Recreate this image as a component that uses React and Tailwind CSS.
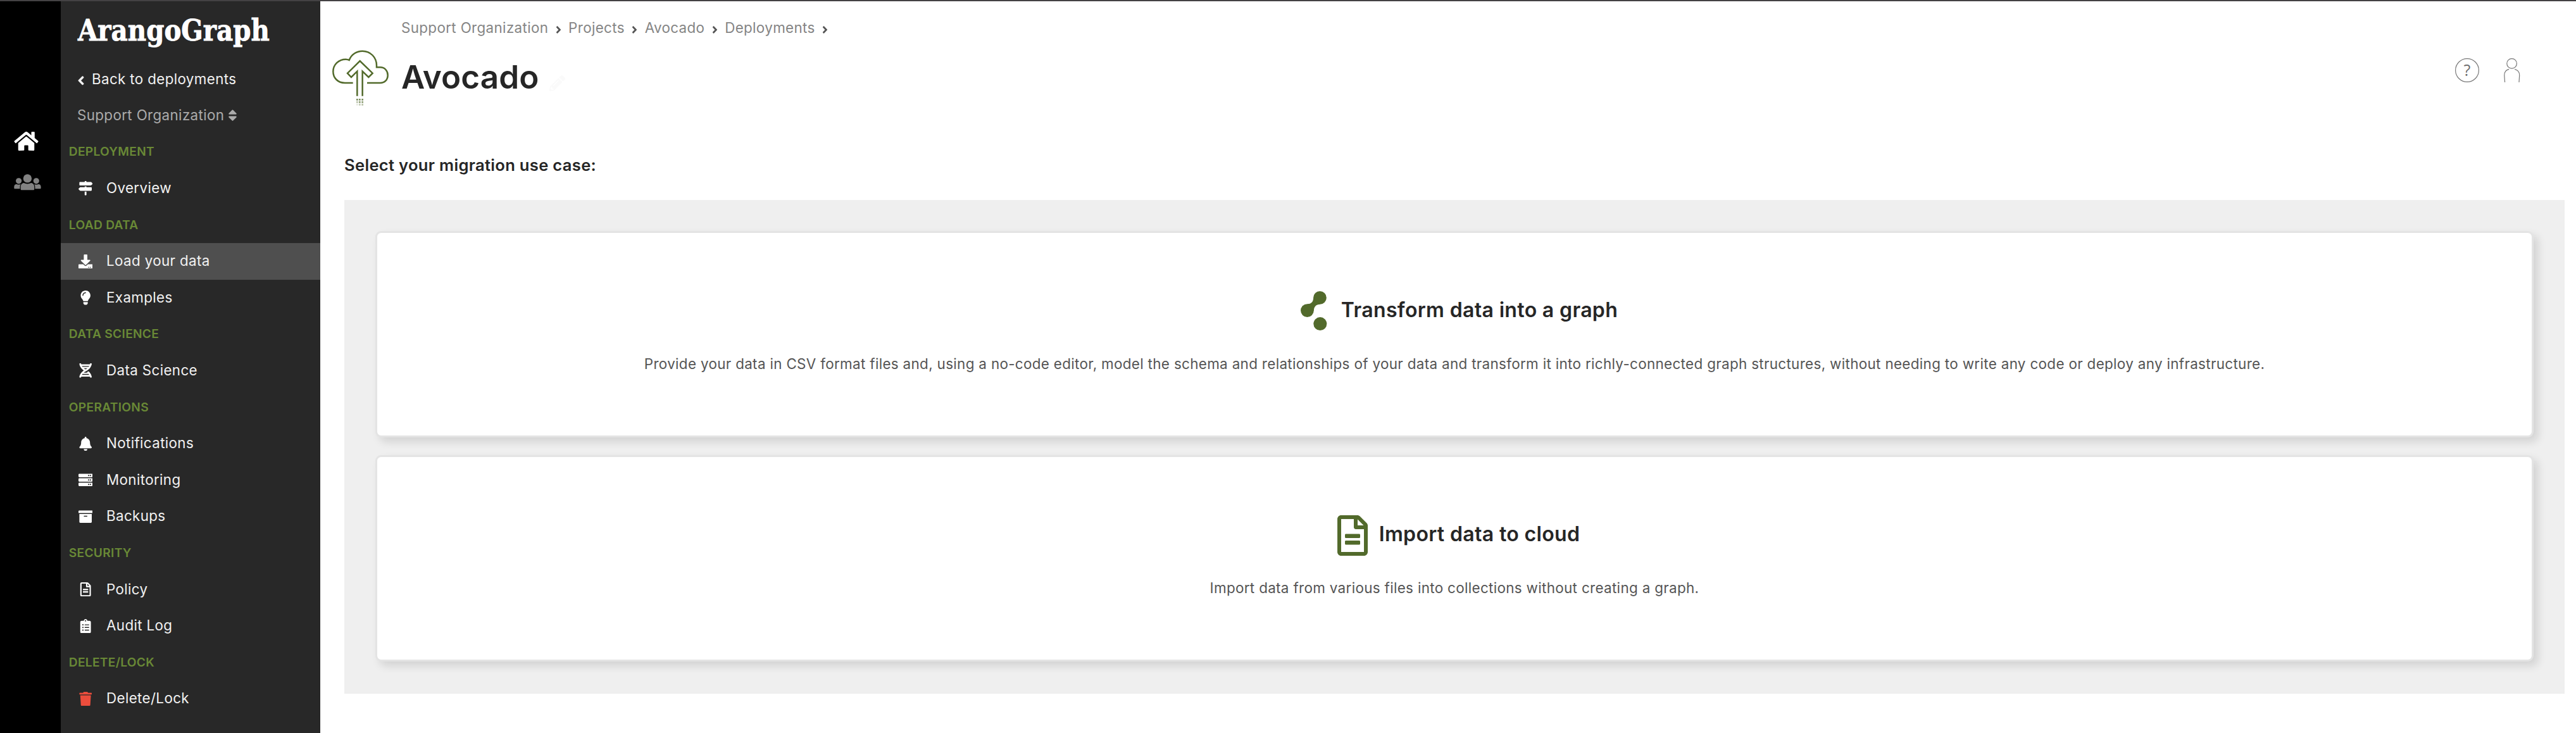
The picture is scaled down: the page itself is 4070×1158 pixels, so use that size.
import React from "react";
import {
  FaAngleLeft,
  FaAngleRight,
  FaArchive,
  FaBell,
  FaClipboardList,
  FaDna,
  FaDownload,
  FaHome,
  FaLightbulb,
  FaMapSigns,
  FaPencilAlt,
  FaRegFileAlt,
  FaServer,
  FaSort,
  FaTrash,
} from "react-icons/fa";

const NAV = [
  { heading: "DEPLOYMENT", items: [{ label: "Overview", Icon: FaMapSigns }] },
  {
    heading: "LOAD DATA",
    items: [
      { label: "Load your data", Icon: FaDownload, active: true },
      { label: "Examples", Icon: FaLightbulb },
    ],
  },
  { heading: "DATA SCIENCE", items: [{ label: "Data Science", Icon: FaDna }] },
  {
    heading: "OPERATIONS",
    items: [
      { label: "Notifications", Icon: FaBell },
      { label: "Monitoring", Icon: FaServer },
      { label: "Backups", Icon: FaArchive },
    ],
  },
  {
    heading: "SECURITY",
    items: [
      { label: "Policy", Icon: FaRegFileAlt },
      { label: "Audit Log", Icon: FaClipboardList },
    ],
  },
  {
    heading: "DELETE/LOCK",
    items: [{ label: "Delete/Lock", Icon: FaTrash, danger: true }],
  },
];

const CRUMBS = ["Support Organization", "Projects", "Avocado", "Deployments"];

function UsersIcon() {
  return (
    <svg viewBox="0 0 43 26" className="h-[26px] w-[43px] fill-[#828282]">
      <circle cx="21.4" cy="6.9" r="6.7" />
      <circle cx="7.6" cy="10.8" r="4.6" />
      <circle cx="35.3" cy="10.8" r="4.6" />
      <path d="M10.7 25.2V20.5C10.7 17 12.4 14.5 15.7 14.1C17.3 14.9 19.3 15.4 21.4 15.4C23.5 15.4 25.5 14.9 27.1 14.1C30.5 14.5 32.2 17 32.2 20.5V23.7C32.2 24.7 31.4 25.3 30.4 25.3H12.5C11.4 25.3 10.7 24.7 10.7 23.7Z" />
      <path d="M.3 22V20C.3 17.5 1.8 15.9 4.2 15.9C6.3 17 8.8 17 10.8 15.9C9.9 17.3 9.5 19 9.5 20.8V23.3H1.6C.8 23.3 .3 22.8 .3 22Z" />
      <path d="M42.6 22V20C42.6 17.5 41.1 15.9 38.7 15.9C36.6 17 34.1 17 32.1 15.9C33 17.3 33.4 19 33.4 20.8V23.3H41.3C42.1 23.3 42.6 22.8 42.6 22Z" />
    </svg>
  );
}

function CloudUploadIcon() {
  return (
    <svg viewBox="0 0 330 330" className="h-[110px] w-[110px] shrink-0">
      <g fill="none" stroke="#526a2b" strokeWidth="7.5">
        <path d="M128 183H90C56 183 34 159 34 129C34 96 61 71 94 71C100 71 105 72 110 75C120 48 145 32 173 32C211 32 240 62 240 100V109H257C279 109 293 126 293 146C293 168 278 183 257 183H195" />
        <path d="M148 245V128L120 156L102 137L161 79L221 137L202 156L173 128V245" />
      </g>
      <g fill="#526a2b">
        <path d="M144 258h8v8h-8zM156 258h8v8h-8zM169 258h8v8h-8z" opacity=".75" />
        <path d="M156 270h8v8h-8zM169 270h8v8h-8z" opacity=".65" />
        <path d="M144 270h8v8h-8zM169 282h8v8h-8z" opacity=".4" />
        <path d="M156 282h8v8h-8z" opacity=".35" />
        <path d="M144 282h8v8h-8z" opacity=".15" />
      </g>
    </svg>
  );
}

function GraphIcon() {
  return (
    <svg viewBox="0 0 42 64" className="ml-[15px] mr-[22px] h-[64px] w-[42px] fill-[#526a2b]">
      <circle cx="30.4" cy="10.4" r="10.4" />
      <circle cx="10.4" cy="30.6" r="10.4" />
      <circle cx="30.8" cy="51.6" r="10.5" />
      <path d="M20 10.8C20 17 16.5 20.4 10.4 20.3L20.8 31C20.8 24.5 24.5 20.7 30.8 20.7Z" />
    </svg>
  );
}

function HelpIcon() {
  return (
    <svg viewBox="0 0 38 38" className="h-[38px] w-[38px]">
      <circle cx="19" cy="19" r="18.4" fill="none" stroke="#787878" strokeWidth="1.2" />
      <text x="18.8" y="28" textAnchor="middle" fill="#6c6c6c" className="font-['Open_Sans',sans-serif] text-[25px]">
        ?
      </text>
    </svg>
  );
}

function UserIcon() {
  return (
    <svg viewBox="0 0 26 38" className="h-[38px] w-[26px]" fill="none" stroke="#787878" strokeWidth="1.2">
      <circle cx="12.6" cy="8.4" r="7.8" />
      <path d="M8.1 17.3C3 18.6.7 22 .8 27L1.6 38M17.2 17.3C22.3 18.6 24.8 22 24.7 27L24 38" />
    </svg>
  );
}

function NavItem({ label, Icon, active, danger }) {
  return (
    <a className={`flex h-[57.6px] items-center gap-[18px] pl-[24px] ${active ? "bg-[#4f4f4f]" : ""}`}>
      <span className={`flex w-[30px] justify-center text-[22.4px] ${danger ? "text-[#ec4d3c]" : "text-white"}`}>
        <Icon />
      </span>
      <span className="pb-px">{label}</span>
    </a>
  );
}

function Sidebar() {
  return (
    <nav className="w-[410px] shrink-0 bg-[#282828] text-[22.4px] leading-[32px] tracking-[0.35px] text-[#f1f1f1]">
      <div className="h-[94px] pl-[27px] pt-[16px]">
        <div className="w-max origin-left scale-x-[0.955] font-['DejaVu_Serif_Condensed','DejaVu_Serif',serif] text-[47px] font-bold leading-[60px] tracking-normal text-white [-webkit-text-stroke:0.8px_white]">
          ArangoGraph
        </div>
      </div>
      <a className="flex h-[57.6px] items-center pl-[25px]">
        <FaAngleLeft className="mr-[10px] mt-[4px] w-[14px] shrink-0" />
        <span>Back to deployments</span>
      </a>
      <div className="flex h-[57.6px] items-center gap-[6px] pl-[26px] text-[#ababab]">
        <span>Support Organization</span>
        <FaSort className="w-[15px]" />
      </div>
      {NAV.map(({ heading, items }) => (
        <section key={heading}>
          <h2 className="flex h-[57.6px] items-center pb-px pl-[12.8px] text-[19.2px] font-semibold tracking-[0.28px] text-[#698936]">
            {heading}
          </h2>
          {items.map((item) => (
            <NavItem key={item.label} {...item} />
          ))}
        </section>
      ))}
    </nav>
  );
}

function Card({ icon, title, children }) {
  return (
    <section className="flex h-[326px] flex-col items-center rounded-[9px] border-[3px] border-[#e4e4e4] bg-white pt-[92px] shadow-[7px_7px_14px_rgba(0,0,0,0.12)]">
      <div className="flex h-[64px] items-center">
        {icon}
        <h3 className="pb-[5px] text-[32px] font-semibold leading-[40px] tracking-[0.35px] text-[#262626]">{title}</h3>
      </div>
      <p className="mt-[35px] whitespace-nowrap text-[22.4px] leading-[32px] tracking-[0.34px] text-[#555]">{children}</p>
    </section>
  );
}

export default function App() {
  return (
    <div className="flex h-[1158px] flex-col overflow-hidden border-t-2 border-[#444244] bg-white font-['Inter',sans-serif]">
      <div className="flex min-h-0 flex-1">
        <aside className="flex w-[96px] shrink-0 flex-col bg-black pl-[22px] pt-[204px]">
          <FaHome className="h-[34px] w-[39px] text-white" />
          <div className="mt-[34.5px]">
            <UsersIcon />
          </div>
        </aside>
        <Sidebar />
        <main className="min-w-0 flex-1 pr-[18px]">
          <header className="flex h-[243px] items-start pl-[9px]">
            <div className="pt-[68px]">
              <CloudUploadIcon />
            </div>
            <div className="ml-[9px] flex-1 pt-[27px]">
              <div className="flex h-[30px] items-center text-[22.4px] leading-[30px] tracking-[0.35px] text-[#858585]">
                {CRUMBS.map((crumb) => (
                  <React.Fragment key={crumb}>
                    <span>{crumb}</span>
                    <FaAngleRight className="mx-[10.4px] mt-[5px] h-[18px] w-[11px] text-[#555]" />
                  </React.Fragment>
                ))}
              </div>
              <div className="mt-[32px] flex h-[60px] items-center">
                <h1 className="text-[51.2px] font-semibold leading-[60px] tracking-[0.1px] text-[#262626]">Avocado</h1>
                <FaPencilAlt className="ml-[16px] mt-[20px] text-[25px] text-[#fafafa]" />
              </div>
            </div>
            <div className="mr-[70px] flex gap-[39px] pt-[90px]">
              <HelpIcon />
              <UserIcon />
            </div>
          </header>
          <div className="pl-[38px]">
            <h2 className="h-[71px] text-[25.6px] font-semibold leading-[31px] tracking-[0.3px] text-[#262626]">
              Select your migration use case:
            </h2>
            <div className="flex h-[780px] flex-col gap-[28px] bg-[#efefef] px-[49px] pt-[49px]">
              <Card icon={<GraphIcon />} title="Transform data into a graph">
                Provide your data in CSV format files and, using a no-code editor, model the schema and relationships of
                your data and transform it into richly-connected graph structures, without needing to write any code or
                deploy any infrastructure.
              </Card>
              <Card
                icon={<FaRegFileAlt className="ml-[13px] mr-[18px] h-[64px] w-[48px] text-[#526a2b]" />}
                title="Import data to cloud"
              >
                Import data from various files into collections without creating a graph.
              </Card>
            </div>
          </div>
        </main>
      </div>
    </div>
  );
}
